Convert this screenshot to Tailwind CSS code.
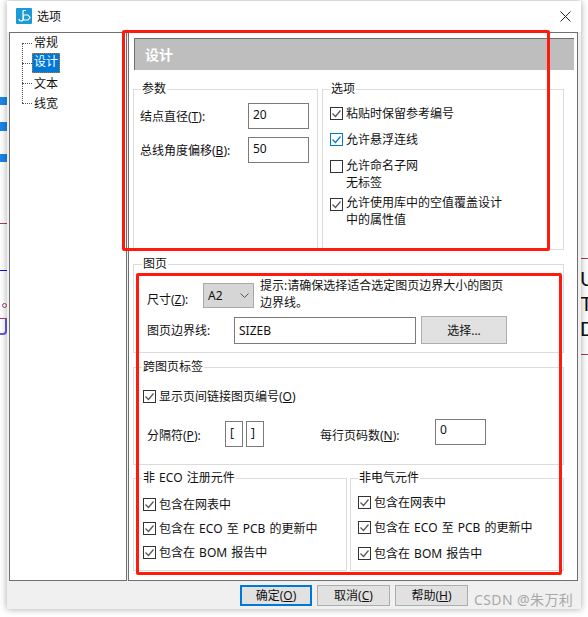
<!DOCTYPE html>
<html lang="zh-CN">
<head>
    <meta charset="UTF-8">
    <title>选项</title>
    <script src="https://cdn.jsdelivr.net/npm/@tailwindcss/browser@4"></script>
</head>
<body class="bg-white">
<div class="relative w-[588px] h-[617px] overflow-hidden bg-white text-[12px] leading-[17px] text-[#111] font-['Noto_Sans','Noto_Sans_CJK_SC',sans-serif]">

    <!-- what shows behind the dialog -->
    <div class="absolute left-0 top-[97px] w-[8px] h-[8px] bg-[#1c86ea]"></div>
    <div class="absolute left-0 top-[122px] w-[8px] h-[9px] bg-[#1c86ea]"></div>
    <div class="absolute left-0 top-[154px] w-[8px] h-[8px] bg-[#1c86ea]"></div>
    <div class="absolute left-0 top-[223px] w-[8px] h-px bg-[#a8386e]"></div>
    <div class="absolute left-0 top-[270px] w-[8px] h-px bg-[#1414e0]"></div>
    <div class="absolute left-[2px] top-[303px] w-[5px] h-[5px] rounded-full border border-[#a8386e]"></div>
    <div class="absolute left-0 top-[318px] w-[7px] h-[17px] border-r-2 border-b-2 border-t border-t-[#a8386e] border-r-[#6a5ae0] border-b-[#6a5ae0] rounded-br-[4px]"></div>
    <div class="absolute left-[581px] top-[258px] w-[7px] h-px bg-[#a8386e]"></div>
    <div class="absolute left-[581px] top-[354px] w-[7px] h-px bg-[#a8386e]"></div>
    <div class="absolute left-[580px] top-[266px] text-[21px] leading-[25px] font-['Liberation_Sans',sans-serif] text-[#111]">U</div>
    <div class="absolute left-[580px] top-[291px] text-[21px] leading-[25px] font-['Liberation_Sans',sans-serif] text-[#111]">T</div>
    <div class="absolute left-[580px] top-[316px] text-[21px] leading-[25px] font-['Liberation_Sans',sans-serif] text-[#111]">D</div>

    <!-- dialog -->
    <div class="absolute left-[7px] top-px w-[574px] h-[608px] flex flex-col bg-[#f0f0f0] shadow-[0_0_7px_rgba(0,0,0,0.35)]">
        <div class="h-[31px] bg-white flex items-center shrink-0">
            <svg class="ml-[9px] mt-[-1px]" width="16" height="16" viewBox="0 0 16 16">
                <rect width="16" height="16" rx="1" fill="#1a9bd8"/>
                <path d="M7 2.5V11a2 2 0 0 1-4 0" fill="none" stroke="#fff" stroke-width="1.2"/>
                <path d="M7 2.5h3" fill="none" stroke="#fff" stroke-width="1"/>
                <path d="M7.5 7h4.5l2 2.5-2 2.5H7.5z" fill="none" stroke="#fff" stroke-width="1.2"/>
            </svg>
            <span class="ml-[5px]">选项</span>
            <svg class="ml-auto mr-[10px]" width="11" height="11" viewBox="0 0 11 11">
                <path d="M.5.5l10 10M10.5.5l-10 10" stroke="#222" stroke-width="1" fill="none"/>
            </svg>
        </div>

        <div class="flex h-[549px] shrink-0 pl-[2px] gap-px">
            <!-- tree -->
            <div class="relative w-[118px] border border-[#707070] bg-white">
                <div class="absolute left-[12px] top-[10px] h-[60px] border-l border-dotted border-[#555]"></div>
                <div class="flex items-center h-[20px] pl-[12px]"><div class="w-[10px] border-t border-dotted border-[#555]"></div><span class="px-[2px] mt-[-2px]">常规</span></div>
                <div class="flex items-center h-[20px] pl-[12px]"><div class="w-[10px] border-t border-dotted border-[#555]"></div><span class="px-[2px] h-[20px] leading-[18px] bg-[#0078d7] text-white outline outline-dotted outline-[#c9761a] outline-offset-[-1px]">设计</span></div>
                <div class="flex items-center h-[20px] pl-[12px]"><div class="w-[10px] border-t border-dotted border-[#555]"></div><span class="px-[2px]">文本</span></div>
                <div class="flex items-center h-[20px] pl-[12px]"><div class="w-[10px] border-t border-dotted border-[#555]"></div><span class="px-[2px]">线宽</span></div>
            </div>

            <!-- page -->
            <div class="w-[450px] border border-[#707070] bg-white">
                <div class="ml-[5px] mt-[5px] w-[440px] h-[32px] bg-[#bebebe] border-t border-l border-[#6e6e6e] flex items-center pl-[10px] text-[14px] font-bold text-white">设计</div>

                <div class="flex gap-[4px] ml-[4px] mt-[13px]">
                    <fieldset class="w-[185px] h-[167px] border border-[#dcdcdc] pl-[6px]">
                        <legend class="ml-px px-px leading-[12px]">参数</legend>
                        <div class="flex items-center mt-[8px]">
                            <label class="w-[108px]">结点直径(<u>T</u>):</label>
                            <div class="w-[61px] h-[26px] border border-[#7a7a7a] px-[4px] leading-[22px]">20</div>
                        </div>
                        <div class="flex items-center mt-[8px]">
                            <label class="w-[108px]">总线角度偏移(<u>B</u>):</label>
                            <div class="w-[61px] h-[26px] border border-[#7a7a7a] px-[4px] leading-[22px]">50</div>
                        </div>
                    </fieldset>

                    <fieldset class="w-[242px] h-[167px] border border-[#dcdcdc] pl-[7px]">
                        <legend class="px-px leading-[12px]">选项</legend>
                        <div class="flex gap-[3px] mt-[10px]">
                            <svg class="mt-[2px] shrink-0" width="13" height="13" viewBox="0 0 13 13"><rect x=".5" y=".5" width="12" height="12" fill="#fff" stroke="#333"/><path d="M2.5 6.5l3 3 5-6" fill="none" stroke="#555" stroke-width="1.2"/></svg>
                            <span>粘贴时保留参考编号</span>
                        </div>
                        <div class="flex gap-[3px] mt-[9px]">
                            <svg class="mt-[2px] shrink-0" width="13" height="13" viewBox="0 0 13 13"><rect x=".5" y=".5" width="12" height="12" fill="#fff" stroke="#0078d7"/><path d="M2.5 6.5l3 3 5-6" fill="none" stroke="#0078d7" stroke-width="1.2"/></svg>
                            <span>允许悬浮连线</span>
                        </div>
                        <div class="flex gap-[3px] mt-[9px]">
                            <svg class="mt-[3px] shrink-0" width="13" height="13" viewBox="0 0 13 13"><rect x=".5" y=".5" width="12" height="12" fill="#fff" stroke="#333"/></svg>
                            <span>允许命名子网<br>无标签</span>
                        </div>
                        <div class="flex gap-[3px] mt-[3px]">
                            <svg class="mt-[4px] shrink-0" width="13" height="13" viewBox="0 0 13 13"><rect x=".5" y=".5" width="12" height="12" fill="#fff" stroke="#333"/><path d="M2.5 6.5l3 3 5-6" fill="none" stroke="#555" stroke-width="1.2"/></svg>
                            <span>允许使用库中的空值覆盖设计<br>中的属性值</span>
                        </div>
                    </fieldset>
                </div>

                <fieldset class="ml-[4px] mt-[8px] w-[431px] h-[95px] border border-[#dcdcdc] pl-[13px]">
                    <legend class="ml-[-5px] px-px leading-[12px]">图页</legend>
                    <div class="flex items-start mt-[7px] h-[34px]">
                        <label class="w-[56px] mt-[14px]">尺寸(<u>Z</u>):</label>
                        <div class="w-[51px] h-[25px] mt-[6px] bg-[#d6d6d6] border border-[#a9a9a9] flex items-center justify-between px-[4px]">
                            <span>A2</span>
                            <svg width="9" height="6" viewBox="0 0 9 6"><path d="M.5.5l4 4 4-4" fill="none" stroke="#555"/></svg>
                        </div>
                        <div class="ml-[6px]">提示:请确保选择适合选定图页边界大小的图页<br>边界线。</div>
                    </div>
                    <div class="flex items-center mt-[5px] h-[28px]">
                        <label class="w-[87px]">图页边界线:</label>
                        <div class="w-[182px] h-[27px] mt-px border border-[#7a7a7a] px-[4px] leading-[25px]">SIZEB</div>
                        <button class="ml-[5px] w-[86px] h-[28px] bg-[#e1e1e1] border border-[#adadad]">选择...</button>
                    </div>
                </fieldset>

                <fieldset class="ml-[4px] mt-[8px] w-[431px] h-[104px] border border-[#dcdcdc] pl-[9px]">
                    <legend class="ml-[-1px] px-px leading-[12px]">跨图页标签</legend>
                    <div class="flex gap-[3px] mt-[15px]">
                        <svg class="mt-[2px] shrink-0" width="13" height="13" viewBox="0 0 13 13"><rect x=".5" y=".5" width="12" height="12" fill="#fff" stroke="#333"/><path d="M2.5 6.5l3 3 5-6" fill="none" stroke="#555" stroke-width="1.2"/></svg>
                        <span>显示页间链接图页编号(<u>O</u>)</span>
                    </div>
                    <div class="flex items-start mt-[14px] pl-[4px]">
                        <label class="w-[78px] mt-[8px]">分隔符(<u>P</u>):</label>
                        <div class="w-[18px] h-[26px] mt-[2px] border border-[#7a7a7a] px-[4px] leading-[22px]">[</div>
                        <div class="w-[18px] h-[26px] mt-[2px] ml-[3px] border border-[#7a7a7a] px-[4px] leading-[22px]">]</div>
                        <label class="w-[115px] ml-[56px] mt-[8px]">每行页码数(<u>N</u>):</label>
                        <div class="w-[51px] h-[26px] border border-[#7a7a7a] px-[4px] leading-[20px]">0</div>
                    </div>
                </fieldset>

                <div class="flex gap-[3px] ml-[4px] mt-[7px]">
                    <fieldset class="w-[214px] h-[99px] border border-[#dcdcdc] pl-[9px]">
                        <legend class="ml-[-1px] px-px leading-[12px] [word-spacing:1px]">非 ECO 注册元件</legend>
                        <div class="flex gap-[3px] mt-[12px]">
                            <svg class="mt-[2px] shrink-0" width="13" height="13" viewBox="0 0 13 13"><rect x=".5" y=".5" width="12" height="12" fill="#fff" stroke="#333"/><path d="M2.5 6.5l3 3 5-6" fill="none" stroke="#555" stroke-width="1.2"/></svg>
                            <span>包含在网表中</span>
                        </div>
                        <div class="flex gap-[3px] mt-[7px]">
                            <svg class="mt-[2px] shrink-0" width="13" height="13" viewBox="0 0 13 13"><rect x=".5" y=".5" width="12" height="12" fill="#fff" stroke="#333"/><path d="M2.5 6.5l3 3 5-6" fill="none" stroke="#555" stroke-width="1.2"/></svg>
                            <span class="[word-spacing:1px]">包含在 ECO 至 PCB 的更新中</span>
                        </div>
                        <div class="flex gap-[3px] mt-[7px]">
                            <svg class="mt-[2px] shrink-0" width="13" height="13" viewBox="0 0 13 13"><rect x=".5" y=".5" width="12" height="12" fill="#fff" stroke="#333"/><path d="M2.5 6.5l3 3 5-6" fill="none" stroke="#555" stroke-width="1.2"/></svg>
                            <span class="[word-spacing:1px]">包含在 BOM 报告中</span>
                        </div>
                    </fieldset>
                    <fieldset class="w-[214px] h-[99px] border border-[#dcdcdc] pl-[7px]">
                        <legend class="px-px leading-[12px]">非电气元件</legend>
                        <div class="flex gap-[3px] mt-[10px]">
                            <svg class="mt-[2px] shrink-0" width="13" height="13" viewBox="0 0 13 13"><rect x=".5" y=".5" width="12" height="12" fill="#fff" stroke="#333"/><path d="M2.5 6.5l3 3 5-6" fill="none" stroke="#555" stroke-width="1.2"/></svg>
                            <span>包含在网表中</span>
                        </div>
                        <div class="flex gap-[3px] mt-[8px]">
                            <svg class="mt-[2px] shrink-0" width="13" height="13" viewBox="0 0 13 13"><rect x=".5" y=".5" width="12" height="12" fill="#fff" stroke="#333"/><path d="M2.5 6.5l3 3 5-6" fill="none" stroke="#555" stroke-width="1.2"/></svg>
                            <span class="[word-spacing:1px]">包含在 ECO 至 PCB 的更新中</span>
                        </div>
                        <div class="flex gap-[3px] mt-[9px]">
                            <svg class="mt-[2px] shrink-0" width="13" height="13" viewBox="0 0 13 13"><rect x=".5" y=".5" width="12" height="12" fill="#fff" stroke="#333"/><path d="M2.5 6.5l3 3 5-6" fill="none" stroke="#555" stroke-width="1.2"/></svg>
                            <span class="[word-spacing:1px]">包含在 BOM 报告中</span>
                        </div>
                    </fieldset>
                </div>
            </div>
        </div>

        <div class="flex gap-[5px] pl-[233px] pt-[4px]">
            <button class="w-[72px] h-[21px] bg-[#e1e1e1] border-2 border-[#0078d7] leading-[16px]">确定(<u>O</u>)</button>
            <button class="w-[73px] h-[21px] bg-[#e1e1e1] border border-[#adadad] leading-[18px]">取消(<u>C</u>)</button>
            <button class="w-[73px] h-[21px] bg-[#e1e1e1] border border-[#adadad] leading-[18px]">帮助(<u>H</u>)</button>
        </div>
    </div>

    <!-- red annotation boxes drawn over the screenshot -->
    <div class="absolute left-[122px] top-[30px] w-[428px] h-[221px] border-[3px] border-[#ff1a0e] rounded-[2px]"></div>
    <div class="absolute left-[136px] top-[273px] w-[426px] h-[302px] border-[3px] border-[#ff1a0e] rounded-[2px]"></div>

    <div class="absolute left-[474px] top-[591px] text-[14px] leading-[18px] tracking-[0.4px] text-[#a8a8a8]">CSDN @朱万利</div>
</div>
</body>
</html>
